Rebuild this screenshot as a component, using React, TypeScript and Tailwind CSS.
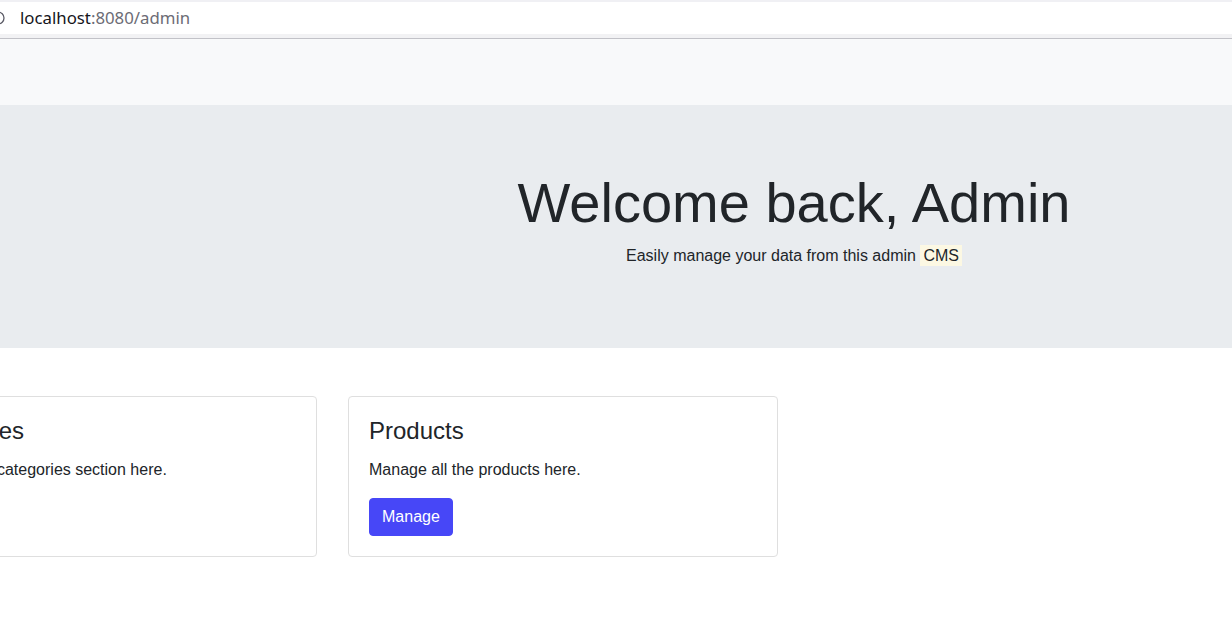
export default function App() {
  return (
    <div className="min-h-screen overflow-hidden bg-white font-['Liberation_Sans',Arial,sans-serif] text-[#212529]">
      {/* browser chrome */}
      <div className="h-[2px] bg-[#f0f0f4]" />
      <div className="flex h-[32px] items-center bg-white">
        <svg className="ml-[-9px] shrink-0" width="14" height="14" viewBox="0 0 14 14">
          <circle cx="7" cy="7" r="6" fill="none" stroke="#5b5b66" strokeWidth="1.3" />
        </svg>
        <span className="ml-[15px] font-['Noto_Sans',sans-serif] text-[16.8px] leading-none">
          <span className="text-[#15141a]">localhost</span>
          <span className="text-[#6c6c75]">:8080/admin</span>
        </span>
      </div>
      <div className="h-[4px] bg-[#f2f2f4]" />
      <div className="h-px bg-[#c2c2c8]" />

      {/* navbar */}
      <nav className="h-[66px] bg-[#f8f9fa]" />

      {/* jumbotron */}
      <section className="flex flex-col items-center bg-[#e9ecef] py-16 pl-[356px]">
        <h1 className="mb-2 text-[56px] font-light leading-[1.2]">Welcome back, Admin</h1>
        <p className="mb-4 text-base leading-6">
          Easily manage your data from this admin{' '}
          <mark className="bg-[#fcf8e3] px-[3px] py-[2px] text-[#212529]">CMS</mark>
        </p>
      </section>

      {/* cards */}
      <div className="ml-[-113px] mt-12 flex gap-[31px]">
        <Card title="Categories" text="Manage the categories section here." />
        <Card title="Products" text="Manage all the products here." />
      </div>
    </div>
  )
}

function Card({ title, text }: { title: string; text: string }) {
  return (
    <div className="w-[430px] shrink-0 rounded border border-[#dfdfdf] bg-white p-5">
      <h4 className="mb-3 text-2xl leading-[1.2]">{title}</h4>
      <p className="mb-4 text-base leading-6">{text}</p>
      <button className="rounded border border-[#4747f7] bg-[#4747f7] px-3 py-1.5 text-base leading-6 text-white">
        Manage
      </button>
    </div>
  )
}
